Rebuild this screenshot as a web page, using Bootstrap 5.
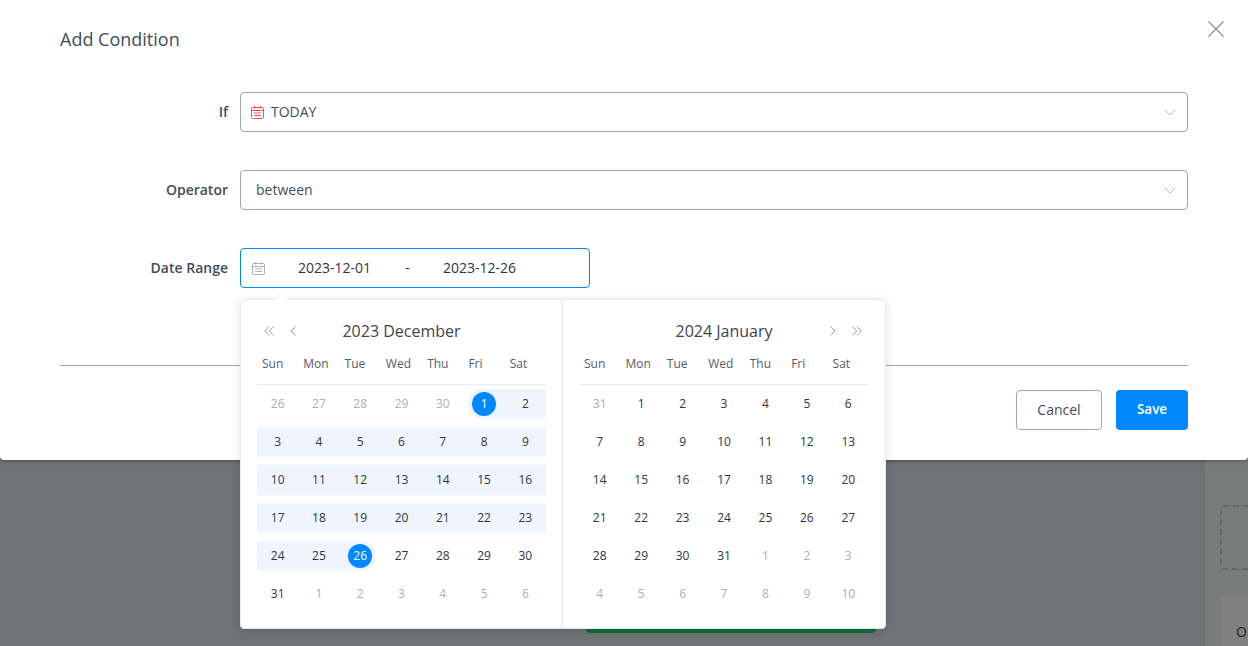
<!DOCTYPE html>
<html lang="en">
<head>
  <meta charset="UTF-8" />
  <title>Add Condition</title>
  <link href="https://cdn.jsdelivr.net/npm/bootstrap@5.3.0/dist/css/bootstrap.min.css" rel="stylesheet" />
  <style>
    html, body { height: 646px; overflow: hidden; }
    body { font-family: "Open Sans", sans-serif; font-size: 14px; color: #454c59; background: #6f7375; }
    .sheet { height: 460px; padding: 0 60px; background: #fff; border-radius: 0 0 4px 4px; box-shadow: 0 1px 4px rgba(0,0,0,.35); position: relative; z-index: 2; }
    .sheet-head { height: 92px; padding-top: 26px; }
    .sheet-title { font-size: 18px; line-height: 27px; font-weight: 400; color: #454c59; margin: 0; }
    .close-x { position: absolute; top: 21px; right: 24px; padding: 0; border: 0; background: none; line-height: 0; }
    .form-line { height: 40px; margin-bottom: 38px; }
    .form-line label { width: 168px; margin: -2px 12px 0 0; text-align: right; font-size: 14px; font-weight: 600; color: #454c59; }
    .field { height: 40px; border: 1px solid #9ca6b4; border-radius: 4px; padding: 0 11px 0 15px; font-size: 14px; color: #454c59; background: #fff; }
    .field.icon-first { padding-left: 10px; }
    .field.range { flex: 0 0 350px; border-color: #0088ff; padding-left: 11px; color: #2f3540; position: relative; }
    .field-text { margin-top: -2px; white-space: nowrap; }
    .today-icon { margin-right: 7px; }
    .range-from { margin-left: 33px; width: 73px; }
    .range-dash { margin-left: 34px; width: 38px; }
    .sheet-foot { border-top: 1px solid #9ca6b4; margin-top: 77px; padding-top: 24px; gap: 14px; }
    .btn-plain, .btn-blue { height: 40px; border-radius: 4px; padding: 0 0 2px; }
    .btn-plain { width: 86px; font-size: 14px; border: 1px solid #9ca6b4; color: #454c59; background: #fff; }
    .btn-blue { width: 72px; font-size: 13.5px; border: 0; font-weight: 600; color: #fff; background: #0088ff; }
    .picker { position: absolute; top: 50px; left: -1px; width: 646px; height: 330px; background: #fff; border: 1px solid #e6e8ee; border-radius: 4px; box-shadow: 0 2px 10px rgba(0,0,0,.12); z-index: 5; }
    .picker::before { content: ""; position: absolute; top: -5px; left: 36px; width: 9px; height: 9px; background: #fff; transform: rotate(45deg); box-shadow: -1px -1px 2px rgba(0,0,0,.04); }
    .month { width: 321px; padding: 17px 16px 0; }
    .month + .month { width: 323px; border-left: 1px solid #e4e6ea; }
    .month-head { display: grid; grid-template-columns: 1fr auto 1fr; align-items: center; height: 28px; }
    .month-name { font-size: 16px; color: #3d4452; }
    .nav-arrows { gap: 12px; padding: 0 7px; }
    .week, .days { display: grid; grid-template-columns: repeat(7, 1fr); }
    .week { height: 40px; padding-bottom: 1px; align-items: center; font-size: 12px; color: #555c68; border-bottom: 1px solid #e8eaf0; }
    .week span { padding-left: 5px; }
    .days { row-gap: 8px; padding-top: 4px; font-size: 12px; color: #2f3540; }
    .days > span { height: 30px; display: flex; align-items: center; justify-content: center; overflow: hidden; }
    .days .off { color: #a9aeb8; }
    .days .band { background: #f0f4fd; }
    .days .band-start { background: linear-gradient(to right, transparent 50%, #f0f4fd 50%); }
    .days .band-end { background: linear-gradient(to right, #f0f4fd 50%, transparent 50%); }
    .dot { width: 24px; height: 24px; line-height: 24px; text-align: center; border-radius: 50%; color: #fff; background: #0088ff; box-shadow: 0 0 0 4px #f0f4fd; font-weight: 500; }
    .under { height: 186px; }
    .under-main { flex: 1; padding: 163px 0 0 586px; }
    .green-strip { width: 290px; height: 10px; background: #0b6b3a; border-radius: 0 0 4px 4px; }
    .under-side { width: 44px; background: #7a7c7b; border-left: 1px solid #6d6f70; padding: 45px 0 0 15px; overflow: hidden; }
    .drop-box { width: 60px; height: 65px; border: 2px dashed #656767; border-radius: 3px; }
    .peek-card { width: 60px; height: 80px; margin: 26px 0 0 1px; padding: 25px 0 0 15px; background: #7f807f; border-radius: 3px; color: #1d1e1e; font-size: 14px; }
  </style>
</head>
<body>
  <div class="sheet">
    <div class="sheet-head">
      <h5 class="sheet-title">Add Condition</h5>
    </div>
    <button class="close-x" aria-label="Close">
      <svg width="16" height="16" viewBox="0 0 16 16" fill="none" stroke="#8a8f96" stroke-width="1.2"><path d="M.5.5l15 15M15.500.5l-15 15"/></svg>
    </button>

    <div class="form-line d-flex align-items-center">
      <label>If</label>
      <div class="field icon-first flex-grow-1 d-flex align-items-center">
        <svg class="today-icon" width="13" height="13" viewBox="0 0 13 13" fill="none" stroke="#f0525a"><rect x=".5" y="1.500" width="12" height="11" rx="1"/><path d="M.5 4.500h12M3.500 0v2.500M9.500 0v2.500M3 7h7M3 9.500h7" /></svg>
        <span class="field-text">TODAY</span>
        <svg class="ms-auto" width="12" height="7" viewBox="0 0 12 7" fill="none" stroke="#b4bac4"><path d="M.5.5L6 6l5.500-5.500"/></svg>
      </div>
    </div>

    <div class="form-line d-flex align-items-center">
      <label>Operator</label>
      <div class="field flex-grow-1 d-flex align-items-center">
        <span class="field-text">between</span>
        <svg class="ms-auto" width="12" height="7" viewBox="0 0 12 7" fill="none" stroke="#b4bac4"><path d="M.5.5L6 6l5.500-5.500"/></svg>
      </div>
    </div>

    <div class="form-line d-flex align-items-center">
      <label>Date Range</label>
      <div class="field range d-flex align-items-center">
        <svg width="13" height="13" viewBox="0 0 13 13" fill="none" stroke="#a9b1bd"><rect x=".5" y="1.500" width="12" height="11" rx="1"/><path d="M.5 4.500h12M3.500 0v2.500M9.500 0v2.500M3 7h7M3 9.500h7"/></svg>
        <span class="field-text range-from">2023-12-01</span>
        <span class="field-text range-dash">-</span>
        <span class="field-text">2023-12-26</span>

        <div class="picker d-flex">
          <div class="month">
            <div class="month-head">
              <div class="nav-arrows d-flex align-items-center">
                <svg width="10" height="10" viewBox="0 0 10 10" fill="none" stroke="#9aa0aa"><path d="M5 .5L.8 5 5 9.500M9.500.5L5.300 5l4.200 4.500"/></svg>
                <svg width="6" height="10" viewBox="0 0 6 10" fill="none" stroke="#9aa0aa" class="ms-1"><path d="M5.500.5L1 5l4.500 4.500"/></svg>
              </div>
              <span class="month-name">2023 December</span>
              <span></span>
            </div>
            <div class="week"><span>Sun</span><span>Mon</span><span>Tue</span><span>Wed</span><span>Thu</span><span>Fri</span><span>Sat</span></div>
            <div class="days">
              <span class="off">26</span><span class="off">27</span><span class="off">28</span><span class="off">29</span><span class="off">30</span><span class="band-start"><span class="dot">1</span></span><span class="band">2</span>
              <span class="band">3</span><span class="band">4</span><span class="band">5</span><span class="band">6</span><span class="band">7</span><span class="band">8</span><span class="band">9</span>
              <span class="band">10</span><span class="band">11</span><span class="band">12</span><span class="band">13</span><span class="band">14</span><span class="band">15</span><span class="band">16</span>
              <span class="band">17</span><span class="band">18</span><span class="band">19</span><span class="band">20</span><span class="band">21</span><span class="band">22</span><span class="band">23</span>
              <span class="band">24</span><span class="band">25</span><span class="band-end"><span class="dot">26</span></span><span>27</span><span>28</span><span>29</span><span>30</span>
              <span>31</span><span class="off">1</span><span class="off">2</span><span class="off">3</span><span class="off">4</span><span class="off">5</span><span class="off">6</span>
            </div>
          </div>
          <div class="month">
            <div class="month-head">
              <span></span>
              <span class="month-name">2024 January</span>
              <div class="nav-arrows d-flex align-items-center justify-content-end">
                <svg width="6" height="10" viewBox="0 0 6 10" fill="none" stroke="#9aa0aa" class="me-1"><path d="M.5.5L5 5 .5 9.500"/></svg>
                <svg width="10" height="10" viewBox="0 0 10 10" fill="none" stroke="#9aa0aa"><path d="M.5.5L4.700 5 .5 9.500M5 .5L9.200 5 5 9.500"/></svg>
              </div>
            </div>
            <div class="week"><span>Sun</span><span>Mon</span><span>Tue</span><span>Wed</span><span>Thu</span><span>Fri</span><span>Sat</span></div>
            <div class="days">
              <span class="off">31</span><span>1</span><span>2</span><span>3</span><span>4</span><span>5</span><span>6</span>
              <span>7</span><span>8</span><span>9</span><span>10</span><span>11</span><span>12</span><span>13</span>
              <span>14</span><span>15</span><span>16</span><span>17</span><span>18</span><span>19</span><span>20</span>
              <span>21</span><span>22</span><span>23</span><span>24</span><span>25</span><span>26</span><span>27</span>
              <span>28</span><span>29</span><span>30</span><span>31</span><span class="off">1</span><span class="off">2</span><span class="off">3</span>
              <span class="off">4</span><span class="off">5</span><span class="off">6</span><span class="off">7</span><span class="off">8</span><span class="off">9</span><span class="off">10</span>
            </div>
          </div>
        </div>
      </div>
    </div>

    <div class="sheet-foot d-flex justify-content-end">
      <button class="btn btn-plain">Cancel</button>
      <button class="btn btn-blue">Save</button>
    </div>
  </div>

  <div class="under d-flex">
    <div class="under-main"><div class="green-strip"></div></div>
    <div class="under-side">
      <div class="drop-box"></div>
      <div class="peek-card">O</div>
    </div>
  </div>
</body>
</html>
